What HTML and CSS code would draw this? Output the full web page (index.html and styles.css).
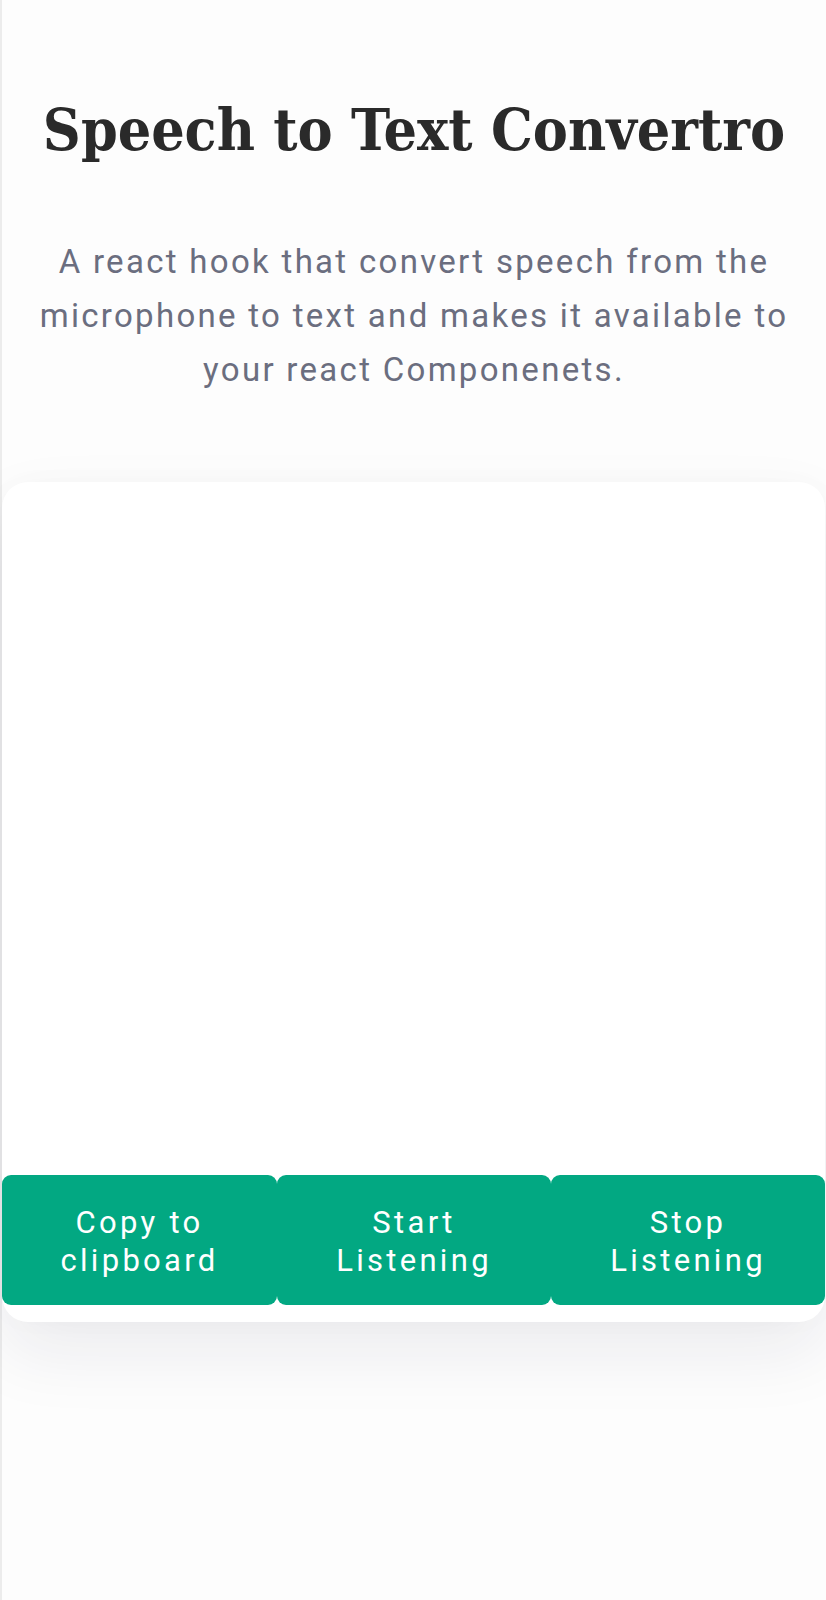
FILE: index.html
```html
<!DOCTYPE html>
<html lang="en">
<head>
<meta charset="utf-8">
<title>Speech to Text Convertro</title>
<link rel="stylesheet" href="styles.css">
</head>
<body>
<div class="page">
  <header class="hero">
    <h1 class="title">Speech to Text Convertro</h1>
    <p class="lead">A react hook that convert speech from the microphone to text and makes it available to your react Componenets.</p>
  </header>
  <main class="card">
    <div class="transcript"></div>
    <div class="actions">
      <button class="btn">Copy to<br>clipboard</button>
      <button class="btn">Start<br>Listening</button>
      <button class="btn">Stop<br>Listening</button>
    </div>
  </main>
</div>
</body>
</html>
```
FILE: styles.css
```css
* { box-sizing: border-box; }
html, body { margin: 0; padding: 0; }
body {
  background: #fdfdfd;
  font-family: Roboto, "Liberation Sans", sans-serif;
}
.page {
  min-height: 1600px;
  border-left: 2px solid #ececec;
  display: flex;
  flex-direction: column;
}
.hero {
  display: flex;
  flex-direction: column;
  align-items: center;
  padding: 96px 10px 0;
}
.title {
  margin: 0;
  font-family: "DejaVu Serif", "Liberation Serif", serif;
  font-stretch: condensed;
  font-weight: 700;
  font-size: 58.5px;
  line-height: 67px;
  color: #2a2a2a;
  white-space: nowrap;
}
.lead {
  margin: 72px 0 0;
  width: 780px;
  text-align: center;
  font-size: 33px;
  line-height: 54px;
  letter-spacing: 2.3px;
  color: #6b6e7f;
}
.card {
  margin-top: 85px;
  width: 823px;
  background: #ffffff;
  border-radius: 26px;
  box-shadow: 0 30px 70px rgba(30, 30, 60, 0.08), 0 0 30px rgba(0,0,0,0.02);
  padding-bottom: 17px;
  display: flex;
  flex-direction: column;
}
.transcript {
  height: 693px;
}
.actions {
  display: grid;
  grid-template-columns: 275px 274px 274px;
}
.btn {
  height: 130px;
  border: 0;
  border-radius: 9px;
  background: #02a882;
  color: #ffffff;
  font-family: Roboto, "Liberation Sans", sans-serif;
  font-size: 31px;
  line-height: 38px;
  letter-spacing: 3.3px;
  padding: 4px 0 0;
}
```
